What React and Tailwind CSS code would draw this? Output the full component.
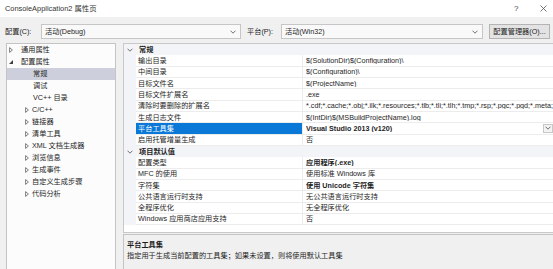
import React from 'react';

const treeItems = [
  { label: '通用属性', level: 0, icon: 'closed' },
  { label: '配置属性', level: 0, icon: 'open' },
  { label: '常规', level: 1, selected: true },
  { label: '调试', level: 1 },
  { label: 'VC++ 目录', level: 1 },
  { label: 'C/C++', level: 1, icon: 'closed' },
  { label: '链接器', level: 1, icon: 'closed' },
  { label: '清单工具', level: 1, icon: 'closed' },
  { label: 'XML 文档生成器', level: 1, icon: 'closed' },
  { label: '浏览信息', level: 1, icon: 'closed' },
  { label: '生成事件', level: 1, icon: 'closed' },
  { label: '自定义生成步骤', level: 1, icon: 'closed' },
  { label: '代码分析', level: 1, icon: 'closed' },
];

const gridRows = [
  { group: '常规' },
  { name: '输出目录', value: '$(SolutionDir)$(Configuration)\\' },
  { name: '中间目录', value: '$(Configuration)\\' },
  { name: '目标文件名', value: '$(ProjectName)' },
  { name: '目标文件扩展名', value: '.exe' },
  { name: '清除时要删除的扩展名', value: '*.cdf;*.cache;*.obj;*.ilk;*.resources;*.tlb;*.tli;*.tlh;*.tmp;*.rsp;*.pgc;*.pgd;*.meta;*.tlog;*.manifest;*.res' },
  { name: '生成日志文件', value: '$(IntDir)$(MSBuildProjectName).log' },
  { name: '平台工具集', value: 'Visual Studio 2013 (v120)', bold: true, selected: true },
  { name: '启用托管增量生成', value: '否' },
  { group: '项目默认值' },
  { name: '配置类型', value: '应用程序(.exe)', bold: true },
  { name: 'MFC 的使用', value: '使用标准 Windows 库' },
  { name: '字符集', value: '使用 Unicode 字符集', bold: true },
  { name: '公共语言运行时支持', value: '无公共语言运行时支持' },
  { name: '全程序优化', value: '无全程序优化' },
  { name: 'Windows 应用商店应用支持', value: '否' },
];

const Chevron = ({ className = '' }) => (
  <svg className={className} width="6" height="4" viewBox="0 0 6 4" fill="none" stroke="#606060" strokeWidth="0.9">
    <path d="M0.5 0.7 L3 3.2 L5.5 0.7" />
  </svg>
);

const TreeIcon = ({ type }) => {
  if (type === 'open') {
    return (
      <svg width="4" height="4" viewBox="0 0 4 4">
        <path d="M4 0 L4 4 L0 4 Z" fill="#404040" />
      </svg>
    );
  }
  return (
    <svg width="4" height="6" viewBox="0 0 4 6" fill="none" stroke="#606060" strokeWidth="0.8">
      <path d="M0.6 0.6 L3.4 3 L0.6 5.4 Z" />
    </svg>
  );
};

const App = () => {
  return (
    <div className="w-[553px] h-[269px] overflow-hidden bg-[#f0f0f0] flex flex-col text-[#1e1e1e] font-['Liberation_Sans','Noto_Sans_CJK_SC',sans-serif] text-[7.2px] leading-none">
      {/* title bar */}
      <div className="h-[17px] bg-white flex items-center pl-[5px]">
        <span className="flex-1 text-[7.4px] text-[#333]">ConsoleApplication2 属性页</span>
        <span className="w-[26px] text-[8px] text-[#444]">?</span>
        <svg className="mr-[6px]" width="7" height="7" viewBox="0 0 7 7" stroke="#555" strokeWidth="0.8">
          <path d="M0.5 0.5 L6.5 6.5 M6.5 0.5 L0.5 6.5" />
        </svg>
      </div>

      {/* configuration row */}
      <div className="mt-[7px] h-[15px] flex items-center pl-[5px]">
        <span className="w-[36px]">配置(C):</span>
        <div className="w-[200px] h-full bg-[#f9f9f9] border border-[#c6c6c6] flex items-center pl-[3px] pr-[4px]">
          <span className="flex-1">活动(Debug)</span>
          <Chevron />
        </div>
        <span className="ml-[6px] w-[34px]">平台(P):</span>
        <div className="w-[202px] h-full bg-[#f9f9f9] border border-[#c6c6c6] flex items-center pl-[3px] pr-[4px]">
          <span className="flex-1">活动(Win32)</span>
          <Chevron />
        </div>
        <div className="ml-[6px] w-[61px] h-full bg-[#e3e3e3] border border-[#b4b4b4] flex items-center justify-center">
          配置管理器(O)...
        </div>
      </div>

      {/* main area */}
      <div className="mt-[4px] flex-1 flex pl-[6px] min-h-0">
        {/* tree */}
        <div className="w-[110px] bg-[#fcfcfc] border border-[#c4c4c4] border-b-0 flex flex-col">
          {treeItems.map((item) => (
            <div
              key={item.label}
              className={`h-[12px] flex items-center ${item.selected ? 'bg-[#cdd0dc]' : ''} ${
                item.level === 0 ? 'pl-[2px]' : item.icon ? 'pl-[18px]' : 'pl-[26px]'
              }`}
            >
              {item.icon && (
                <span className={`${item.level === 0 ? 'w-[12px]' : 'w-[7px]'} flex items-center`}>
                  <TreeIcon type={item.icon} />
                </span>
              )}
              <span>{item.label}</span>
            </div>
          ))}
        </div>

        {/* property grid + description */}
        <div className="ml-[7px] flex-1 flex flex-col min-w-0">
          <div className="h-[190px] bg-white border border-[#c8c8c8] border-r-0 flex flex-col overflow-hidden">
            {gridRows.map((row, i) =>
              row.group ? (
                <div key={i} className="h-[11.33px] shrink-0 bg-[#f3f4f7] flex items-center">
                  <span className="w-[15px] flex items-center pl-[3px]">
                    <Chevron />
                  </span>
                  <span className="font-bold">{row.group}</span>
                </div>
              ) : (
                <div key={i} className="h-[11.33px] shrink-0 flex">
                  <div className="w-[12px] bg-[#f3f4f7]" />
                  <div
                    className={`w-[167px] flex items-center pl-[2px] border-b border-r border-[#ececec] whitespace-nowrap ${
                      row.selected ? 'bg-[#0a78d7] text-white' : ''
                    }`}
                  >
                    {row.name}
                  </div>
                  <div className={`flex-1 min-w-0 flex items-center pl-[3px] border-b border-[#ececec] ${row.bold ? 'font-bold' : ''}`}>
                    <span className="flex-1 whitespace-nowrap overflow-hidden">{row.value}</span>
                    {row.selected && (
                      <span className="w-[10px] h-[9px] border border-[#c8c8c8] bg-[#f3f3f3] flex items-center justify-center">
                        <Chevron />
                      </span>
                    )}
                  </div>
                </div>
              )
            )}
          </div>
          <div className="flex-1 mt-[1px] border-l border-t border-[#c4c4c4] bg-[#f0f0f0] pl-[3px] pt-[6px] flex flex-col gap-[4px]">
            <span className="font-bold">平台工具集</span>
            <span>指定用于生成当前配置的工具集；如果未设置，则将使用默认工具集</span>
          </div>
        </div>
      </div>
    </div>
  );
};

export default App;
